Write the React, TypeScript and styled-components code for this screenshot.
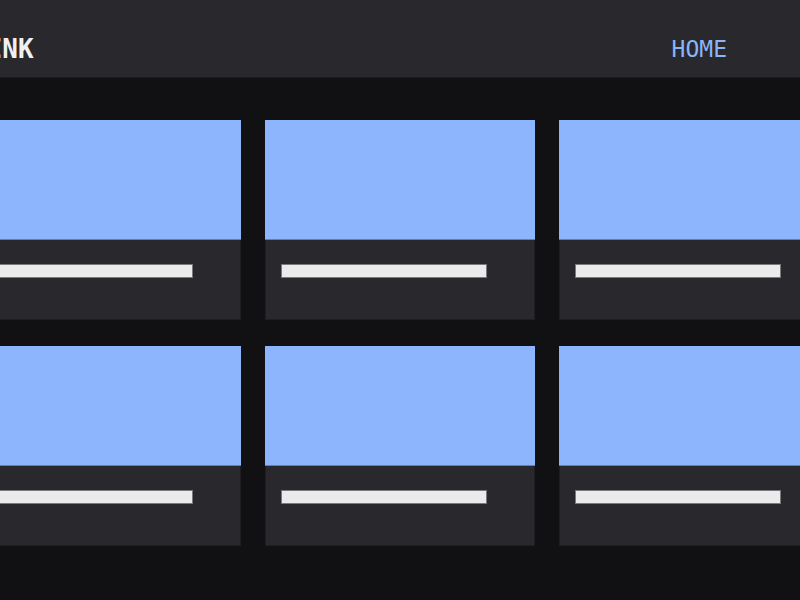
import styled, { createGlobalStyle } from 'styled-components';

const GlobalStyle = createGlobalStyle`
  html, body {
    margin: 0;
    padding: 0;
    background: #111113;
    overflow: hidden;
  }

  * {
    box-sizing: border-box;
  }
`;

const Page = styled.div`
  width: 100vw;
  height: 100vh;
  background: #111113;
  display: flex;
  flex-direction: column;
  align-items: center;
  overflow: hidden;
`;

const Header = styled.header`
  width: 100%;
  height: 78px;
  flex-shrink: 0;
  background: #28282d;
  border-bottom: 1px solid #1d1d21;
  display: flex;
  justify-content: center;
  padding-top: 20px;
`;

const HeaderInner = styled.div`
  width: 858px;
  flex-shrink: 0;
  display: flex;
  align-items: center;
  justify-content: space-between;
  padding-right: 102px;
`;

const Logo = styled.div`
  font-family: 'DejaVu Sans Mono', 'Liberation Mono', monospace;
  font-weight: 700;
  font-size: 26px;
  color: #f0f0f0;
`;

const Nav = styled.nav`
  display: flex;
  gap: 32px;
`;

const NavLink = styled.a`
  font-family: 'DejaVu Sans Mono', 'Liberation Mono', monospace;
  font-size: 23px;
  color: #8ab4f8;
  text-decoration: none;
`;

const Main = styled.main`
  width: 100%;
  display: flex;
  justify-content: center;
  padding-top: 42px;
`;

const Grid = styled.div`
  width: 858px;
  flex-shrink: 0;
  display: grid;
  grid-template-columns: repeat(3, 270px);
  column-gap: 24px;
  row-gap: 26px;
`;

const Card = styled.div`
  height: 200px;
  background: #28282d;
  display: flex;
  flex-direction: column;
  box-shadow: inset 0 0 0 1px #1f1f23;
`;

const Thumb = styled.div`
  height: 120px;
  flex-shrink: 0;
  background: #8db5fd;
  border-bottom: 1px solid #5f7fb8;
`;

const CardBody = styled.div`
  flex: 1;
  padding: 24px 16px;
`;

const Bar = styled.div`
  width: 206px;
  height: 14px;
  background: #ebebeb;
  border: 1px solid #7a7a7e;
`;

const cards = [1, 2, 3, 4, 5, 6];

export default function App() {
  return (
    <Page>
      <GlobalStyle />
      <Header>
        <HeaderInner>
          <Logo>LINK</Logo>
          <Nav>
            <NavLink href="#">HOME</NavLink>
          </Nav>
        </HeaderInner>
      </Header>

      <Main>
        <Grid>
          {cards.map((id) => (
            <Card key={id}>
              <Thumb />
              <CardBody>
                <Bar />
              </CardBody>
            </Card>
          ))}
        </Grid>
      </Main>
    </Page>
  );
}
